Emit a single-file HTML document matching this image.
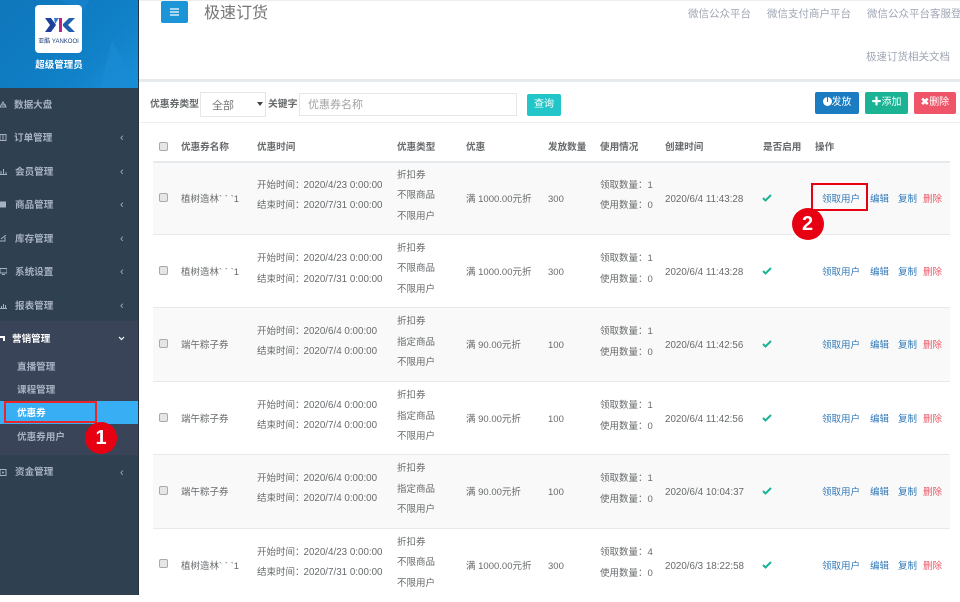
<!DOCTYPE html>
<html lang="zh"><head><meta charset="utf-8"><title>极速订货</title>
<style>
*{box-sizing:border-box}
html,body{margin:0;padding:0;width:960px;height:595px;overflow:hidden;background:#fff;font-family:"Liberation Sans","Noto Sans CJK SC",sans-serif;color:#676a6c;font-size:10px}
.a{position:absolute;white-space:nowrap;line-height:14px}
#side{position:absolute;left:0;top:0;width:139px;height:595px;background:#2f4050;border-right:1px solid #26323e}
#head{position:absolute;left:0;top:0;width:138px;height:88px;background:linear-gradient(135deg,#0f76bb 0%,#0f7fc6 60%,#1b8fd8 100%);overflow:hidden}
#logo{position:absolute;left:35px;top:5px;width:47px;height:48px;background:#fff;border-radius:4px}
.m{position:absolute;left:14px;color:#a7b1c2;font-size:9.6px;font-weight:700;line-height:14px;white-space:nowrap}
.ic{position:absolute;left:0;width:7px;height:7px;color:#a7b1c2}
.ch{position:absolute;left:120px;color:#a7b1c2;font-size:11px;line-height:14px}
.s{position:absolute;left:17px;color:#a7b1c2;font-size:9.6px;font-weight:700;line-height:14px;white-space:nowrap}
.row{position:absolute;left:153px;width:797px;height:73.5px;border-top:1px solid #e7eaec}
.row.o{background:#f9f9f9}
.row>.a{font-size:9.5px;transform:translateY(1px)}
.row.t>.a{transform:translateY(2px)}
.d{font-size:9.8px;margin-left:-1px}
.row>.a.dt{font-size:9.8px}
.cb{position:absolute;left:6px;width:9px;height:9px;border:1px solid #aaa;border-radius:2px;background:#e6e6e6}
.l{color:#337ab7}.r{color:#ed5565}
.bt{position:absolute;top:93px;height:22px;border-radius:2px;color:#fff;font-size:10px;line-height:22px;text-align:center;white-space:nowrap}
.th{position:absolute;top:141px;font-size:9.6px;font-weight:700;line-height:14px;white-space:nowrap;color:#676a6c}
.red{position:absolute;border-radius:50%;background:#e60012;color:#fff;width:32px;height:32px;font-size:20px;font-weight:700;line-height:32px;text-align:center}
</style></head><body>

<div id="side">
<div id="head">
<svg style="position:absolute;left:0;top:0" width="138" height="88"><polygon points="112,40 138,88 100,88" fill="#1a8cd6" opacity=".7"/><polygon points="60,0 90,0 82,12" fill="#1a86cf" opacity=".6"/></svg>
<div id="logo">
<svg width="47" height="48" viewBox="0 0 47 48"><path d="M10 13h6l5 7-5 7h-6l5-7z" fill="#1f3f9a"/><path d="M19 13h5l-4 6z" fill="#3a7bc8"/><path d="M24 13h3v14h-3z" fill="#c0208a"/><path d="M28 19l6-6h6l-7 7 7 7h-6l-6-6z" fill="#1f5fb0"/><text x="23.5" y="38" font-size="6" text-anchor="middle" fill="#1f3f7a" font-family="Liberation Sans,Noto Sans CJK SC,sans-serif">亚酷 YANKOOI</text></svg>
</div>
<div class="a" style="left:0;width:118px;text-align:center;top:59px;color:#fff;font-weight:700;font-size:9.500px">超级管理员</div>
</div>
<svg class="ic" style="top:101px" viewBox="0 0 7 7"><path d="M0 6l3-5 3 5zM2 4h4" stroke="#a7b1c2" fill="none"/></svg>
<div class="m" style="top:99px">数据大盘</div>
<svg class="ic" style="top:134px" viewBox="0 0 7 7"><rect x="0" y="0.5" width="6" height="6" stroke="#a7b1c2" fill="none"/><path d="M3 0v7" stroke="#a7b1c2"/></svg>
<div class="m" style="top:132px">订单管理</div><div class="ch" style="top:131px">‹</div>
<svg class="ic" style="top:168px" viewBox="0 0 7 7"><path d="M1 7V3M3.500 7V1M6 7V4M0 6.500h7" stroke="#a7b1c2" fill="none"/></svg>
<div class="m" style="left:15px;top:166px">会员管理</div><div class="ch" style="top:165px">‹</div>
<svg class="ic" style="top:201px" viewBox="0 0 7 7"><rect x="0" y="0.500" width="6" height="6" fill="#a7b1c2"/></svg>
<div class="m" style="left:15px;top:199px">商品管理</div><div class="ch" style="top:198px">‹</div>
<svg class="ic" style="top:235px" viewBox="0 0 7 7"><path d="M0 6h5V2M1 4l5-4" stroke="#a7b1c2" fill="none"/></svg>
<div class="m" style="left:15px;top:233px">库存管理</div><div class="ch" style="top:232px">‹</div>
<svg class="ic" style="top:268px" viewBox="0 0 7 7"><rect x="0" y="0.500" width="7" height="4.500" stroke="#a7b1c2" fill="none"/><path d="M2 6.500h3" stroke="#a7b1c2"/></svg>
<div class="m" style="left:15px;top:266px">系统设置</div><div class="ch" style="top:265px">‹</div>
<svg class="ic" style="top:302px" viewBox="0 0 7 7"><path d="M1.500 6V4M3.500 6V2M5.500 6V3M0 6.500h7" stroke="#a7b1c2" fill="none"/></svg>
<div class="m" style="left:15px;top:300px">报表管理</div><div class="ch" style="top:299px">‹</div>
<div style="position:absolute;left:0;top:321px;width:138px;height:134px;background:#3a4458"></div>
<svg class="ic" style="top:335px" viewBox="0 0 7 7"><path d="M0 1h5v5h-2V3H0z" fill="#fff"/></svg>
<div class="m" style="left:12px;top:333px;color:#fff">营销管理</div>
<svg style="position:absolute;left:118px;top:336px" width="7" height="5"><path d="M1 1l2.500 2.500L6 1" stroke="#fff" stroke-width="1.200" fill="none"/></svg>
<div class="s" style="top:361px">直播管理</div>
<div class="s" style="top:384px">课程管理</div>
<div style="position:absolute;left:0;top:401px;width:138px;height:23px;background:#38aef5"></div>
<div class="s" style="top:407px;color:#fff">优惠券</div>
<div class="s" style="top:431px">优惠券用户</div>
<svg class="ic" style="top:469px" viewBox="0 0 7 7"><rect x="0" y="0.500" width="6" height="6" stroke="#a7b1c2" fill="none"/><circle cx="3" cy="3.500" r="1" fill="#a7b1c2"/></svg>
<div class="m" style="left:15px;top:466px">资金管理</div><div class="ch" style="top:466px">‹</div>
<div style="position:absolute;left:4px;top:401px;width:93px;height:22px;border:2px solid #e8262b"></div>
</div>

<!-- top bar -->
<div style="position:absolute;left:139px;top:0;width:821px;height:1px;background:#eee"></div>
<div style="position:absolute;left:161px;top:1px;width:27px;height:22px;background:#1c94d8;border-radius:2px"></div>
<svg style="position:absolute;left:169px;top:8px" width="11" height="8"><path d="M1 1h9M1 4h9M1 7h9" stroke="#fff" stroke-width="1.200"/></svg>
<div class="a" style="left:204px;top:5px;font-size:16px;line-height:18px;color:#757575">极速订货</div>
<div class="a" style="left:688px;top:7px;font-size:10.500px;color:#a0a6b5">微信公众平台</div>
<div class="a" style="left:767px;top:7px;font-size:10.500px;color:#a0a6b5">微信支付商户平台</div>
<div class="a" style="left:867px;top:7px;width:93px;overflow:hidden;font-size:10.500px;color:#a0a6b5">微信公众平台客服登录</div>
<div class="a" style="left:866px;top:50px;font-size:10.500px;color:#a0a6b5">极速订货相关文档</div>
<div style="position:absolute;left:139px;top:79px;width:821px;height:3px;background:#e7eaec"></div>

<!-- filter -->
<div class="a" style="left:150px;top:98px;font-size:9.8px;font-weight:700">优惠券类型</div>
<div style="position:absolute;left:200px;top:92px;width:66px;height:25px;border:1px solid #e5e6e7"></div>
<div class="a" style="left:212px;top:99px;font-size:11px;color:#777">全部</div>
<svg style="position:absolute;left:257px;top:102px" width="6" height="5"><path d="M0 0h6L3 4z" fill="#444"/></svg>
<div class="a" style="left:268px;top:98px;font-size:9.8px;font-weight:700">关键字</div>
<div style="position:absolute;left:299px;top:93px;width:218px;height:23px;border:1px solid #e5e6e7"></div>
<div class="a" style="left:308px;top:98px;font-size:11px;color:#a3a3a3">优惠券名称</div>
<div class="bt" style="left:527px;top:94px;width:34px;height:22px;background:#23c6c8">查询</div>
<div class="bt" style="left:815px;top:92px;width:44px;height:22px;background:#1c7cc2;font-weight:400">
<svg style="vertical-align:-1px" width="9" height="9"><circle cx="4.500" cy="4.500" r="4.500" fill="#fff"/><path d="M4.500 0v5" stroke="#1c7cc2"/></svg>发放</div>
<div class="bt" style="left:865px;top:92px;width:43px;height:22px;background:#1ab394"><b>✚</b>添加</div>
<div class="bt" style="left:914px;top:92px;width:42px;height:22px;background:#f05468"><b>✖</b>删除</div>
<div style="position:absolute;left:139px;top:122px;width:821px;height:1px;background:#eee"></div>

<!-- table head -->
<div class="cb" style="left:159px;top:142px"></div>
<div class="th" style="left:181px">优惠券名称</div>
<div class="th" style="left:257px">优惠时间</div>
<div class="th" style="left:397px">优惠类型</div>
<div class="th" style="left:466px">优惠</div>
<div class="th" style="left:548px">发放数量</div>
<div class="th" style="left:600px">使用情况</div>
<div class="th" style="left:665px">创建时间</div>
<div class="th" style="left:763px">是否启用</div>
<div class="th" style="left:815px">操作</div>

<!-- rows -->
<div class="row o" style="top:160.500px;border-top:2px solid #e7eaec">
<div class="cb" style="top:30px"></div>
<div class="a" style="left:28px;top:29px">植树造林&#96; &#96; &#96;1</div>
<div class="a" style="left:104px;top:15px">开始时间：<span class="d">2020/4/23 0:00:00</span></div>
<div class="a" style="left:104px;top:35px">结束时间：<span class="d">2020/7/31 0:00:00</span></div>
<div class="a" style="left:244px;top:5px">折扣券</div><div class="a" style="left:244px;top:25px">不限商品</div><div class="a" style="left:244px;top:46px">不限用户</div>
<div class="a" style="left:313px;top:29px">满 1000.00元折</div>
<div class="a" style="left:395px;top:29px">300</div>
<div class="a" style="left:447px;top:15px">领取数量：1</div><div class="a" style="left:447px;top:35px">使用数量：0</div>
<div class="a dt" style="left:512px;top:29px">2020/6/4 11:43:28</div>
<svg style="position:absolute;left:609px;top:31px" width="10" height="8"><path d="M1 4l2.500 2.500L9 1" stroke="#1ab394" stroke-width="2" fill="none"/></svg>
<div class="a l" style="left:669px;top:29px">领取用户</div><div class="a l" style="left:717px;top:29px">编辑</div><div class="a l" style="left:745px;top:29px">复制</div><div class="a r" style="left:770px;top:29px">删除</div>
</div>
<div class="row t" style="top:234px">
<div class="cb" style="top:31px"></div>
<div class="a" style="left:28px;top:29px">植树造林&#96; &#96; &#96;1</div>
<div class="a" style="left:104px;top:15px">开始时间：<span class="d">2020/4/23 0:00:00</span></div>
<div class="a" style="left:104px;top:36px">结束时间：<span class="d">2020/7/31 0:00:00</span></div>
<div class="a" style="left:244px;top:5px">折扣券</div><div class="a" style="left:244px;top:25px">不限商品</div><div class="a" style="left:244px;top:46px">不限用户</div>
<div class="a" style="left:313px;top:29px">满 1000.00元折</div>
<div class="a" style="left:395px;top:29px">300</div>
<div class="a" style="left:447px;top:15px">领取数量：1</div><div class="a" style="left:447px;top:36px">使用数量：0</div>
<div class="a dt" style="left:512px;top:29px">2020/6/4 11:43:28</div>
<svg style="position:absolute;left:609px;top:32px" width="10" height="8"><path d="M1 4l2.500 2.500L9 1" stroke="#1ab394" stroke-width="2" fill="none"/></svg>
<div class="a l" style="left:669px;top:29px">领取用户</div><div class="a l" style="left:717px;top:29px">编辑</div><div class="a l" style="left:745px;top:29px">复制</div><div class="a r" style="left:770px;top:29px">删除</div>
</div>
<div class="row o" style="top:307px">
<div class="cb" style="top:31px"></div>
<div class="a" style="left:28px;top:30px">端午粽子券</div>
<div class="a" style="left:104px;top:16px">开始时间：<span class="d">2020/6/4 0:00:00</span></div>
<div class="a" style="left:104px;top:36px">结束时间：<span class="d">2020/7/4 0:00:00</span></div>
<div class="a" style="left:244px;top:6px">折扣券</div><div class="a" style="left:244px;top:27px">指定商品</div><div class="a" style="left:244px;top:47px">不限用户</div>
<div class="a" style="left:313px;top:30px">满 90.00元折</div>
<div class="a" style="left:395px;top:30px">100</div>
<div class="a" style="left:447px;top:16px">领取数量：1</div><div class="a" style="left:447px;top:37px">使用数量：0</div>
<div class="a dt" style="left:512px;top:30px">2020/6/4 11:42:56</div>
<svg style="position:absolute;left:609px;top:32px" width="10" height="8"><path d="M1 4l2.500 2.500L9 1" stroke="#1ab394" stroke-width="2" fill="none"/></svg>
<div class="a l" style="left:669px;top:30px">领取用户</div><div class="a l" style="left:717px;top:30px">编辑</div><div class="a l" style="left:745px;top:30px">复制</div><div class="a r" style="left:770px;top:30px">删除</div>
</div>
<div class="row" style="top:381px">
<div class="cb" style="top:31px"></div>
<div class="a" style="left:28px;top:30px">端午粽子券</div>
<div class="a" style="left:104px;top:16px">开始时间：<span class="d">2020/6/4 0:00:00</span></div>
<div class="a" style="left:104px;top:36px">结束时间：<span class="d">2020/7/4 0:00:00</span></div>
<div class="a" style="left:244px;top:6px">折扣券</div><div class="a" style="left:244px;top:27px">指定商品</div><div class="a" style="left:244px;top:47px">不限用户</div>
<div class="a" style="left:313px;top:30px">满 90.00元折</div>
<div class="a" style="left:395px;top:30px">100</div>
<div class="a" style="left:447px;top:16px">领取数量：1</div><div class="a" style="left:447px;top:37px">使用数量：0</div>
<div class="a dt" style="left:512px;top:30px">2020/6/4 11:42:56</div>
<svg style="position:absolute;left:609px;top:32px" width="10" height="8"><path d="M1 4l2.500 2.500L9 1" stroke="#1ab394" stroke-width="2" fill="none"/></svg>
<div class="a l" style="left:669px;top:30px">领取用户</div><div class="a l" style="left:717px;top:30px">编辑</div><div class="a l" style="left:745px;top:30px">复制</div><div class="a r" style="left:770px;top:30px">删除</div>
</div>
<div class="row o" style="top:454px">
<div class="cb" style="top:31px"></div>
<div class="a" style="left:28px;top:30px">端午粽子券</div>
<div class="a" style="left:104px;top:16px">开始时间：<span class="d">2020/6/4 0:00:00</span></div>
<div class="a" style="left:104px;top:36px">结束时间：<span class="d">2020/7/4 0:00:00</span></div>
<div class="a" style="left:244px;top:6px">折扣券</div><div class="a" style="left:244px;top:27px">指定商品</div><div class="a" style="left:244px;top:47px">不限用户</div>
<div class="a" style="left:313px;top:30px">满 90.00元折</div>
<div class="a" style="left:395px;top:30px">100</div>
<div class="a" style="left:447px;top:16px">领取数量：1</div><div class="a" style="left:447px;top:37px">使用数量：0</div>
<div class="a dt" style="left:512px;top:30px">2020/6/4 10:04:37</div>
<svg style="position:absolute;left:609px;top:32px" width="10" height="8"><path d="M1 4l2.500 2.500L9 1" stroke="#1ab394" stroke-width="2" fill="none"/></svg>
<div class="a l" style="left:669px;top:30px">领取用户</div><div class="a l" style="left:717px;top:30px">编辑</div><div class="a l" style="left:745px;top:30px">复制</div><div class="a r" style="left:770px;top:30px">删除</div>
</div>
<div class="row" style="top:528px">
<div class="cb" style="top:30px"></div>
<div class="a" style="left:28px;top:30px">植树造林&#96; &#96; &#96;1</div>
<div class="a" style="left:104px;top:16px">开始时间：<span class="d">2020/4/23 0:00:00</span></div>
<div class="a" style="left:104px;top:36px">结束时间：<span class="d">2020/7/31 0:00:00</span></div>
<div class="a" style="left:244px;top:6px">折扣券</div><div class="a" style="left:244px;top:26px">不限商品</div><div class="a" style="left:244px;top:47px">不限用户</div>
<div class="a" style="left:313px;top:30px">满 1000.00元折</div>
<div class="a" style="left:395px;top:30px">300</div>
<div class="a" style="left:447px;top:16px">领取数量：4</div><div class="a" style="left:447px;top:37px">使用数量：0</div>
<div class="a dt" style="left:512px;top:30px">2020/6/3 18:22:58</div>
<svg style="position:absolute;left:609px;top:32px" width="10" height="8"><path d="M1 4l2.500 2.500L9 1" stroke="#1ab394" stroke-width="2" fill="none"/></svg>
<div class="a l" style="left:669px;top:30px">领取用户</div><div class="a l" style="left:717px;top:30px">编辑</div><div class="a l" style="left:745px;top:30px">复制</div><div class="a r" style="left:770px;top:30px">删除</div>
</div>

<!-- annotations -->
<div style="position:absolute;left:811px;top:183px;width:57px;height:28px;border:2px solid #e60012"></div>
<div class="red" style="left:791.500px;top:208px">2</div>
<div class="red" style="left:85px;top:422px">1</div>
</body></html>
